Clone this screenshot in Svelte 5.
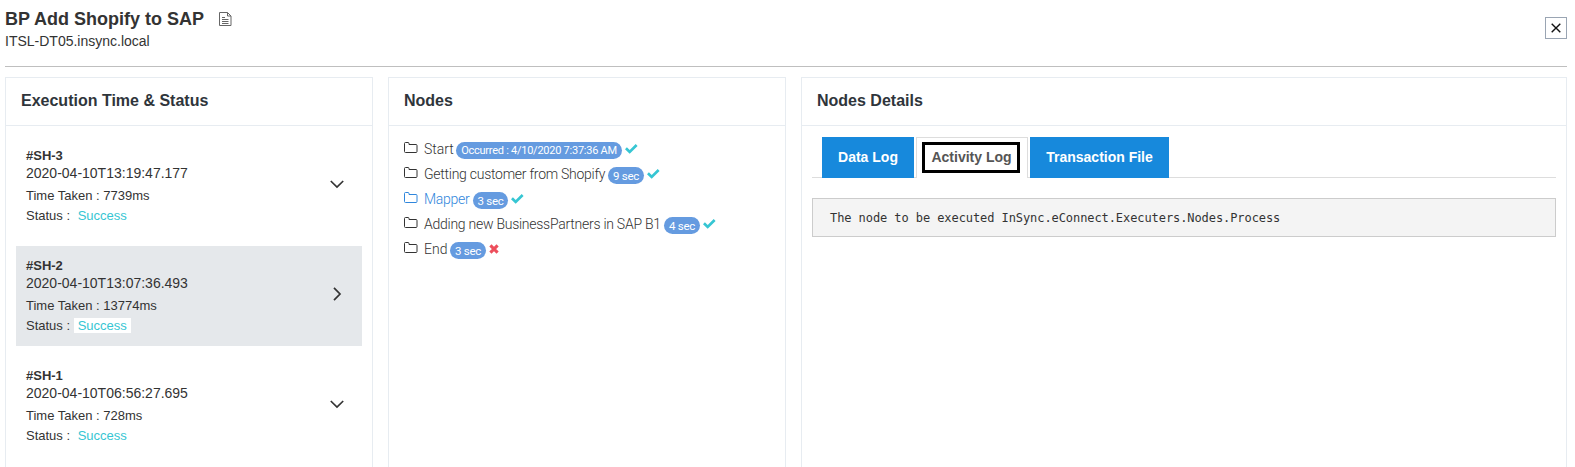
<script>
  const runs = [
    { id: '#SH-3', time: '2020-04-10T13:19:47.177', taken: '7739ms', open: false },
    { id: '#SH-2', time: '2020-04-10T13:07:36.493', taken: '13774ms', open: true },
    { id: '#SH-1', time: '2020-04-10T06:56:27.695', taken: '728ms', open: false }
  ];
  const nodes = [
    { name: 'Start', badge: 'Occurred : 4/10/2020 7:37:36 AM', w: 29, bw: 166, ok: true },
    { name: 'Getting customer from Shopify', badge: '9 sec', w: 181, bw: 36, ok: true },
    { name: 'Mapper', badge: '3 sec', w: 46, bw: 35, ok: true, active: true },
    { name: 'Adding new BusinessPartners in SAP B1', badge: '4 sec', w: 237, bw: 36, ok: true },
    { name: 'End', badge: '3 sec', w: 23, bw: 36, ok: false }
  ];
</script>

<header>
  <div>
    <h1>BP Add Shopify to SAP
      <svg width="13" height="15" viewBox="0 0 13 15" fill="none" stroke="#666"><path d="M.5 .5h8l3.500 3.500v9.500H.500zM8.500 .500v3.500H12M3 5.500h3M3 7.500h6.500M3 9.500h6.500M3 11.500h6.500" /></svg>
    </h1>
    <p>ITSL-DT05.insync.local</p>
  </div>
  <button aria-label="Close"><svg width="10" height="10" viewBox="0 0 10 10" stroke="#111" stroke-width="1.4"><path d="M.7 .7l8.600 8.600M9.300 .7L.7 9.300" /></svg></button>
</header>

<main>
  <section class="runs">
    <h2>Execution Time &amp; Status</h2>
    <div class="list">
      {#each runs as r}
        <article class:open={r.open}>
          <div>
            <b>{r.id}</b>
            <div class="time">{r.time}</div>
            <div class="line taken">Time Taken : {r.taken}</div>
            <div class="line">Status : <span class="success">Success</span></div>
          </div>
          <svg class="chev" width="14" height="14" viewBox="0 0 14 14" fill="none" stroke="#333" stroke-width="1.7">
            <path d={r.open ? 'M4 .8l6 6.200-6 6.200' : 'M.8 4L7 10l6.200-6'} />
          </svg>
        </article>
      {/each}
    </div>
  </section>

  <section class="nodes">
    <h2>Nodes</h2>
    <ul>
      {#each nodes as n}
        <li class:active={n.active}>
          <svg class="folder" width="14" height="12" viewBox="0 0 14 12" fill="none" stroke="currentColor"><path d="M.5 9.500V1.500q0-1 1-1h2.500q1 0 1 1v1h7q1 0 1 1V9.500q0 1-1 1H1.500q-1 0-1-1z" /></svg>
          <span class="name" class:long={n.name.length > 5} style:width="{n.w}px">{n.name}</span>
          <span class="badge" class:wide={n.badge.length > 5} style:width="{n.bw}px">{n.badge}</span>
          {#if n.ok}
            <svg class="mark" width="13" height="10" viewBox="0 0 13 10"><path d="M0 5.200L1.900 3.200 4.700 6 10.700 0 12.600 1.900 4.700 9.800z" fill="#36c6d3" /></svg>
          {:else}
            <svg class="mark" width="10" height="10" viewBox="0 0 10 10"><path d="M1.400 1.400L8.600 8.600M8.600 1.400L1.400 8.600" stroke="#ed4e5c" stroke-width="3.100" /></svg>
          {/if}
        </li>
      {/each}
    </ul>
  </section>

  <section class="details">
    <h2>Nodes Details</h2>
    <div class="content">
      <nav>
        <button class="tab data">Data Log</button>
        <button class="tab current"><span>Activity Log</span></button>
        <button class="tab trans">Transaction File</button>
      </nav>
      <pre>The node to be executed InSync.eConnect.Executers.Nodes.Process</pre>
    </div>
  </section>
</main>

<style>
  :global(body) { background: #fff; overflow: hidden; }
  :global(#app) { height: 467px; overflow: hidden; font-family: "Liberation Sans", Arial, sans-serif; color: #333; }
  header { box-sizing: border-box; display: flex; justify-content: space-between; height: 67px; margin: 0 8px 0 5px; padding-top: 9px; border-bottom: 1px solid #bfbfbf; }
  h1 { display: flex; gap: 15px; margin: 0; font-size: 18px; line-height: 20px; white-space: nowrap; }
  h1 svg { margin-top: 3px; }
  p { margin: 2px 0 0; font-size: 14px; line-height: 20px; }
  header button { box-sizing: border-box; width: 22px; height: 22px; margin-top: 8px; padding: 0; border: 1px solid #9aa5b3; background: #fff; display: grid; place-items: center; }
  main { display: grid; grid-template-columns: 368px 398px 766px; gap: 15px; margin: 10px 0 0 5px; height: 400px; }
  section { box-sizing: border-box; height: 400px; border: 1px solid #e7ecf1; }
  h2 { box-sizing: border-box; height: 48px; margin: 0; padding-left: 15px; font-size: 16px; line-height: 45px; color: #2f353b; border-bottom: 1px solid #e7ecf1; }
  .list { display: grid; gap: 10px; padding: 10px 10px 0; }
  article { box-sizing: border-box; height: 100px; padding: 10px; display: flex; justify-content: space-between; }
  article.open { background: #e5e8eb; }
  b { display: block; height: 18px; font-size: 13px; line-height: 20px; }
  .time { font-size: 14px; line-height: 18px; }
  .line { font-size: 13px; line-height: 20px; white-space: nowrap; }
  .taken { margin-top: 4px; }
  .success { display: inline-block; line-height: 15px; padding: 0 4px; color: #36c6d3; background: #fff; }
  .chev { margin: 31px 8px 0 0; }
  ul { list-style: none; margin: 0; padding: 11px 0 0 15px; font-family: Roboto, sans-serif; font-weight: 300; }
  li { display: flex; align-items: flex-start; height: 25px; }
  li.active { color: #2f86dc; }
  .folder { margin: 5px 6px 0 0; }
  .name { font-size: 14px; line-height: 25px; white-space: nowrap; }
  .name.long { letter-spacing: -0.26px; }
  .badge { box-sizing: border-box; height: 17px; margin: 5px 3px 0; border-radius: 9px; background: #659be0; color: #fff; font-size: 11.500px; line-height: 18px; font-weight: 400; text-align: center; white-space: nowrap; letter-spacing: -0.3px; }
  .badge.wide { font-size: 11px; letter-spacing: -0.25px; }
  .mark { margin-top: 7px; }
  .content { padding: 11px 10px 0; }
  nav { box-sizing: border-box; display: flex; gap: 2px; height: 41px; padding-left: 10px; border-bottom: 1px solid #ddd; }
  .tab { box-sizing: border-box; height: 41px; padding: 0 0 2px; border: 0; background: #1789dc; color: #fff; font: bold 14px "Liberation Sans", Arial, sans-serif; white-space: nowrap; }
  .data { width: 92px; }
  .current { width: 112px; padding: 4px 5px 5px; border: 1px solid #ddd; border-bottom: 0; background: #fff; color: #555; }
  .current span { box-sizing: border-box; display: block; width: 98px; height: 31px; padding-left: 1px; line-height: 24px; border: 3px solid #000; }
  .trans { width: 139px; }
  pre { box-sizing: border-box; height: 39px; margin: 20px 0 0; padding-left: 17px; border: 1px solid #ccc; background: #f4f4f4; font: 12px/38px "DejaVu Sans Mono", monospace; letter-spacing: -0.078px; }
</style>
